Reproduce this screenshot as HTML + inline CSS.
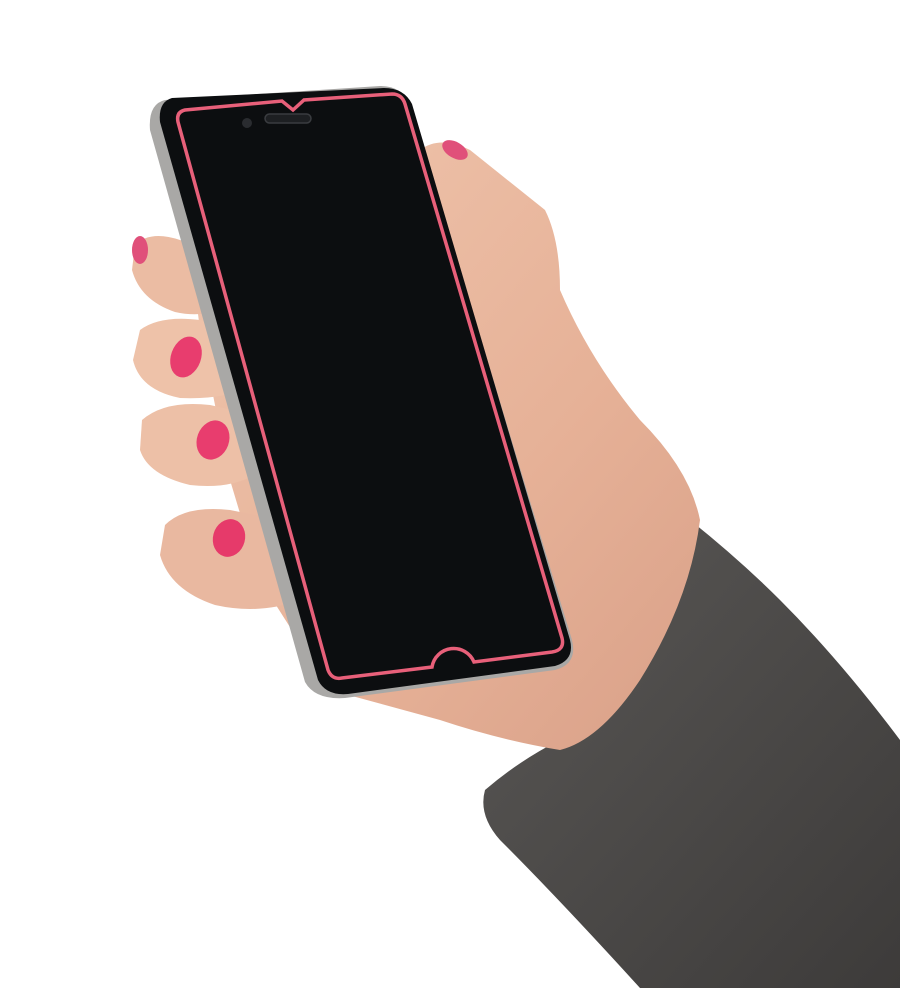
<!DOCTYPE html>
<html><head><meta charset="utf-8"><style>html,body{margin:0;padding:0;background:#fff;width:900px;height:988px;overflow:hidden}</style></head>
<body>
<svg width="900" height="988" viewBox="0 0 900 988" xmlns="http://www.w3.org/2000/svg">
<defs>
<linearGradient id="skin" x1="0" y1="0" x2="1" y2="1">
<stop offset="0" stop-color="#f0c6ae"/><stop offset="0.6" stop-color="#e6b197"/><stop offset="1" stop-color="#d9a088"/>
</linearGradient>
<linearGradient id="sleeve" x1="0" y1="0" x2="1" y2="1">
<stop offset="0" stop-color="#5a5856"/><stop offset="1" stop-color="#3d3b3a"/>
</linearGradient>
</defs>
<path d="M690,520 Q740,560 780,600 Q840,660 900,740 L900,988 L640,988 Q560,900 500,840 Q478,815 485,790 Q520,760 560,740 Q640,650 690,520 Z" fill="url(#sleeve)"/>
<path d="M420,150 Q440,135 470,150 Q520,190 545,210 Q560,240 560,290 Q590,360 640,420 Q690,470 700,520 Q690,600 640,680 Q600,740 560,750 Q500,740 440,720 L330,690 L260,580 L230,480 L200,330 L190,250 Z" fill="url(#skin)"/>
<path d="M135,245 Q150,230 180,240 L225,255 L240,300 Q210,320 175,312 Q140,300 132,270 Z" fill="#ebbca3"/>
<path d="M140,330 Q160,315 200,320 L245,330 L255,385 Q225,400 180,398 Q140,390 133,360 Z" fill="#eec2a9"/>
<path d="M142,420 Q165,400 210,405 L255,415 L262,470 Q235,490 190,485 Q148,475 140,450 Z" fill="#edc0a7"/>
<path d="M165,525 Q185,505 230,510 L280,520 L300,600 Q260,615 215,605 Q170,590 160,555 Z" fill="#e9b8a0"/>
<ellipse cx="186" cy="357" rx="15" ry="21" transform="rotate(20 186 357)" fill="#e83d6e"/>
<ellipse cx="213" cy="440" rx="16" ry="20" transform="rotate(20 213 440)" fill="#e83d6e"/>
<ellipse cx="229" cy="538" rx="16" ry="19" transform="rotate(15 229 538)" fill="#e63a6a"/>
<ellipse cx="140" cy="250" rx="8" ry="14" fill="#e0507a"/>
<ellipse cx="455" cy="150" rx="14" ry="8" transform="rotate(30 455 150)" fill="#e0507a"/>
<path d="M165,100 Q148,104 150,130 L305,682 Q315,700 345,698 L555,670 Q578,664 572,640 L410,104 Q402,86 380,86 Z" fill="#a9a8a6"/>
<path d="M172,98 Q158,102 160,122 L318,680 Q326,696 348,694 L555,666 Q575,660 570,640 L412,104 Q404,88 384,88 Z" fill="#0c0e10"/>
<path d="M185,110 L282,101 L293,110 L304,100 L392,94 Q402,94 405,104 L562,638 Q565,650 552,652 L474,662 A22,22 0 0 0 432,667 L342,678 Q332,680 328,670 L178,122 Q176,112 185,110 Z" fill="none" stroke="#e8607a" stroke-width="3.5"/>
<circle cx="247" cy="123" r="5" fill="#2a2c30"/>
<rect x="265" y="114" width="46" height="9" rx="4.5" fill="#1d1f22" stroke="#3a3c40" stroke-width="1.5"/>
</svg>
</body></html>
